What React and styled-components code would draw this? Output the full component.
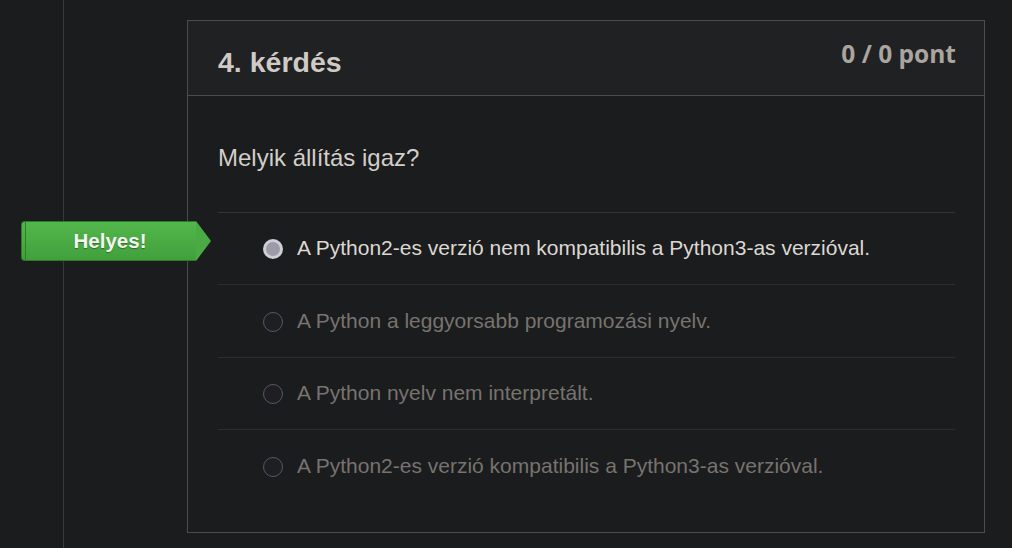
import styled, { createGlobalStyle } from "styled-components";

const GlobalStyle = createGlobalStyle`
    html, body {
        margin: 0;
        padding: 0;
        background: #1b1c1e;
        font-family: "Liberation Sans", Arial, sans-serif;
    }
`;

const answers = [
    { text: "A Python2-es verzió nem kompatibilis a Python3-as verzióval.", selected: true, correct: true },
    { text: "A Python a leggyorsabb programozási nyelv.", selected: false },
    { text: "A Python nyelv nem interpretált.", selected: false },
    { text: "A Python2-es verzió kompatibilis a Python3-as verzióval.", selected: false },
];

export default function App() {
    return (
        <>
            <GlobalStyle />
            <StyledPage>
                <StyledGutter />
                <StyledMain>
                    <StyledCard>
                        <StyledHeader>
                            <StyledTitle>4. kérdés</StyledTitle>
                            <StyledPoints>0 / 0 pont</StyledPoints>
                        </StyledHeader>
                        <StyledBody>
                            <StyledQuestion>Melyik állítás igaz?</StyledQuestion>
                            <StyledAnswerList>
                                {answers.map((answer) => (
                                    <StyledAnswer key={answer.text}>
                                        {answer.correct && <StyledBadge>Helyes!</StyledBadge>}
                                        <StyledRadio $selected={answer.selected} />
                                        <StyledAnswerText $selected={answer.selected}>
                                            {answer.text}
                                        </StyledAnswerText>
                                    </StyledAnswer>
                                ))}
                            </StyledAnswerList>
                        </StyledBody>
                    </StyledCard>
                </StyledMain>
            </StyledPage>
        </>
    );
}

const StyledPage = styled.div`
    display: flex;
    min-height: 548px;
    background: #1b1c1e;
`

const StyledGutter = styled.div`
    width: 63px;
    flex-shrink: 0;
    border-right: 1px solid #38393b;
`

const StyledMain = styled.div`
    flex: 1;
    padding: 20px 27px 0 123px;
`

const StyledCard = styled.div`
    border: 1px solid #4b4c4e;
    background: #1b1c1e;
`

const StyledHeader = styled.div`
    display: flex;
    justify-content: space-between;
    align-items: flex-start;
    height: 74px;
    padding: 0 28px 0 30px;
    background: #202123;
    border-bottom: 1px solid #4b4c4e;
`

const StyledTitle = styled.h2`
    margin: 0;
    padding-top: 27px;
    font-size: 28.5px;
    font-weight: bold;
    color: #cfcac4;
    line-height: 1;
`

const StyledPoints = styled.div`
    padding-top: 21px;
    font-family: "Open Sans", sans-serif;
    font-size: 24.5px;
    font-weight: bold;
    color: #aaa59e;
    line-height: 1;
`

const StyledBody = styled.div`
    padding: 0 29px 31px 30px;
`

const StyledQuestion = styled.div`
    padding: 48px 0 39px;
    font-size: 24px;
    color: #d2cec8;
    line-height: 1.2;
`

const StyledAnswerList = styled.div`
    border-top: 1px solid #333436;
`

const StyledAnswer = styled.div`
    position: relative;
    display: flex;
    align-items: center;
    height: 71.4px;
    padding: 0 0 0 45px;
    border-bottom: 1px solid #2c2d2f;
    &:last-child {
        border-bottom: none;
    }
`

const StyledRadio = styled.span`
    flex-shrink: 0;
    width: 20px;
    height: 20px;
    box-sizing: border-box;
    border-radius: 50%;
    margin: 2px 14px 0 0;
    background: ${({ $selected }) => ($selected ? "#9d9ba9" : "#1f1f23")};
    border: ${({ $selected }) => ($selected ? "3px solid #cfced6" : "1px solid #59595c")};
`

const StyledAnswerText = styled.span`
    font-size: 21px;
    color: ${({ $selected }) => ($selected ? "#dcd8d2" : "#77736e")};
`

const StyledBadge = styled.div`
    position: absolute;
    left: -197px;
    top: 8px;
    width: 175px;
    height: 40px;
    box-sizing: border-box;
    display: flex;
    align-items: center;
    justify-content: center;
    padding-left: 2px;
    font-size: 20.5px;
    font-weight: bold;
    color: #f4f4f0;
    text-shadow: 0 1px 1px rgba(0, 0, 0, 0.35);
    background: linear-gradient(#52b74c, #41a03c);
    border: 1px solid #2e7a28;
    border-right: none;
    border-radius: 4px 0 0 4px;
    &::before {
        content: "";
        position: absolute;
        left: 3px;
        top: 0;
        bottom: 0;
        width: 1px;
        background: #2f7d2b;
    }
    &::after {
        content: "";
        position: absolute;
        right: -15px;
        top: -1px;
        width: 0;
        height: 0;
        border-top: 20px solid transparent;
        border-bottom: 20px solid transparent;
        border-left: 15px solid #4aab44;
    }
`
